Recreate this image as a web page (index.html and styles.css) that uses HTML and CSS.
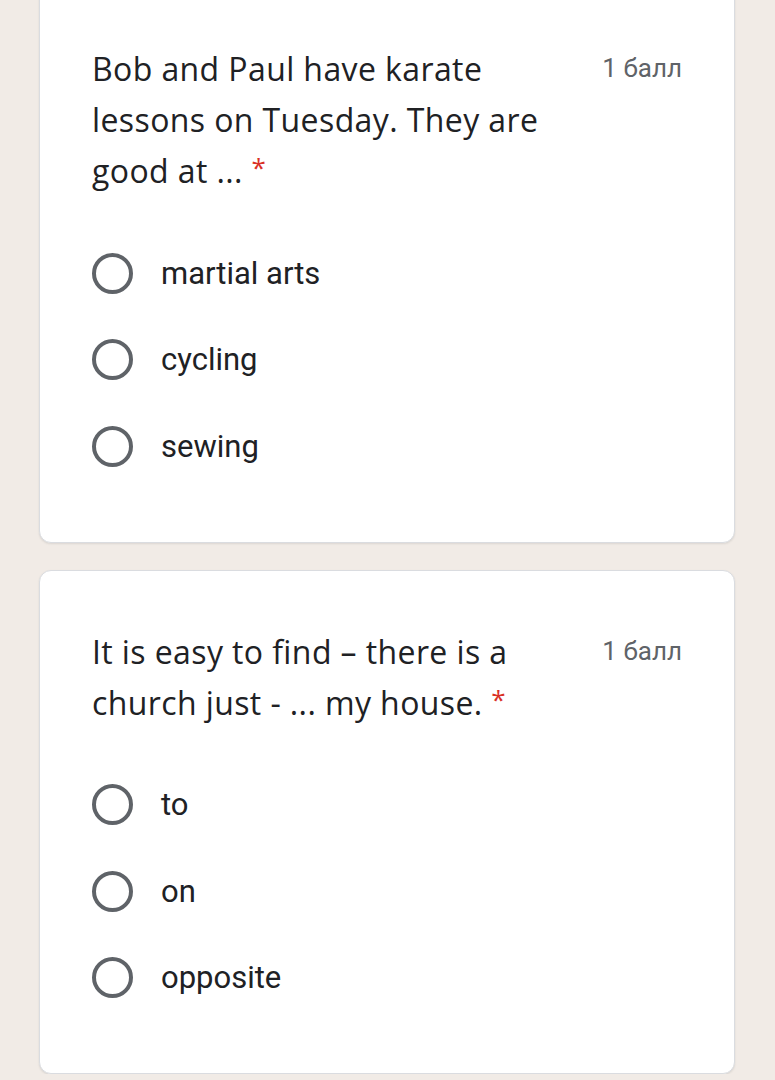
FILE: index.html
```html
<!DOCTYPE html>
<html lang="ru">
<head>
<meta charset="utf-8">
<title>Form</title>
<link rel="stylesheet" href="styles.css">
</head>
<body>
<main class="form">
  <section class="card">
    <div class="q-head">
      <div class="q-title">Bob and Paul have karate lessons on Tuesday. They are good at ...&nbsp;<span class="req">*</span></div>
      <div class="q-points">1 балл</div>
    </div>
    <ul class="options">
      <li class="option"><span class="radio"></span><span class="opt-label">martial arts</span></li>
      <li class="option"><span class="radio"></span><span class="opt-label">cycling</span></li>
      <li class="option"><span class="radio"></span><span class="opt-label">sewing</span></li>
    </ul>
  </section>
  <section class="card">
    <div class="q-head">
      <div class="q-title">It is easy to find – there is a church just - ... my house.&nbsp;<span class="req">*</span></div>
      <div class="q-points">1 балл</div>
    </div>
    <ul class="options">
      <li class="option"><span class="radio"></span><span class="opt-label">to</span></li>
      <li class="option"><span class="radio"></span><span class="opt-label">on</span></li>
      <li class="option"><span class="radio"></span><span class="opt-label">opposite</span></li>
    </ul>
  </section>
</main>
</body>
</html>
```

FILE: styles.css
```css
html, body {
  margin: 0;
  padding: 0;
  background: #f1ebe6;
}

.form {
  display: flex;
  flex-direction: column;
  gap: 27px;
  margin: -13px 40px 0 39px;
}

.card {
  background: #ffffff;
  border: 1px solid #dadce0;
  border-radius: 12px;
  box-shadow: 0 1px 2px rgba(60, 64, 67, 0.12);
  padding: 55px 52px 52px 52px;
}

.q-head {
  display: flex;
  align-items: flex-start;
  justify-content: space-between;
  gap: 30px;
}

.q-title {
  max-width: 462px;
  font-family: "Open Sans", Inter, sans-serif;
  font-size: 32px;
  letter-spacing: 0.4px;
  line-height: 51px;
  color: #202124;
}

.req {
  color: #d93025;
  font-size: 26px;
  line-height: 0;
  vertical-align: 6px;
}

.q-points {
  font-family: Roboto, "Liberation Sans", sans-serif;
  font-size: 26px;
  line-height: 51px;
  color: #5f6368;
  white-space: nowrap;
}

.options {
  list-style: none;
  margin: 34px 0 0 0;
  padding: 0;
}

.option {
  display: flex;
  align-items: center;
  height: 86.5px;
}

.radio {
  box-sizing: border-box;
  width: 41px;
  height: 41px;
  border: 4px solid #5f6368;
  border-radius: 50%;
  flex: none;
}

.opt-label {
  margin-left: 28px;
  font-family: Roboto, "Liberation Sans", sans-serif;
  font-size: 31px;
  color: #202124;
}
```
